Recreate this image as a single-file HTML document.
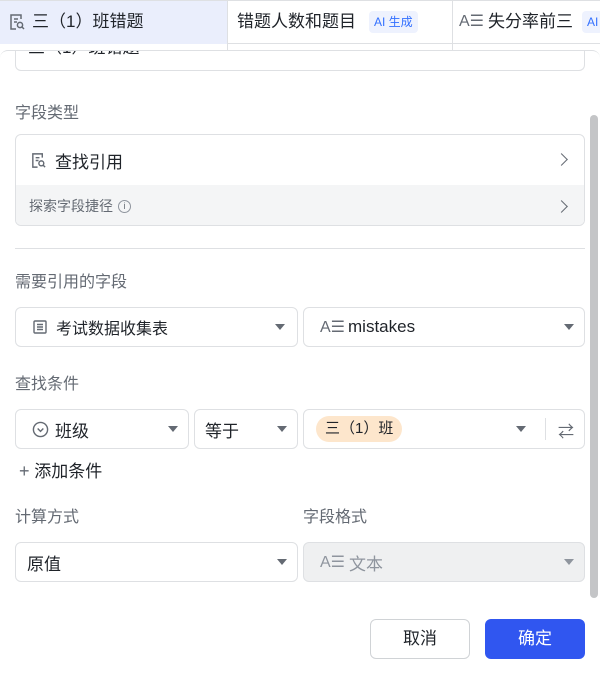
<!DOCTYPE html>
<html><head><meta charset="utf-8"><style>
*{box-sizing:border-box;margin:0;padding:0}
body{width:600px;height:675px;overflow:hidden;background:#fff;font-family:"Liberation Sans","Noto Sans CJK SC",sans-serif;color:#1f2329;position:relative}
.abs{position:absolute}
.lbl{position:absolute;font-size:16px;color:#646a73;line-height:20px}
.box{position:absolute;border:1px solid #dee0e3;border-radius:6px;background:#fff;display:flex;align-items:center;font-size:16px}
.arr{position:absolute;right:10px;top:50%;margin-top:-3px;width:0;height:0;border-left:5px solid transparent;border-right:5px solid transparent;border-top:6px solid #646a73}
.chev{position:absolute;right:18px;width:9px;height:9px;border-right:1.6px solid #646a73;border-top:1.6px solid #646a73;transform:rotate(45deg)}
</style></head><body>
<!-- header -->
<div class="abs" style="left:0;top:0;width:600px;height:44px;border-bottom:1px solid #dee0e3;border-top:1px solid #dee0e3"></div>
<div class="abs" style="left:0;top:1px;width:227px;height:43px;background:#eaeefc"></div>
<div class="abs" style="left:227px;top:0;width:1px;height:50px;background:#dee0e3"></div>
<div class="abs" style="left:452px;top:0;width:1px;height:50px;background:#dee0e3"></div>
<div class="abs" style="left:8px;top:12px;font-size:17px;line-height:20px;color:#1f2329;display:flex;align-items:center">
<svg width="18" height="18" viewBox="0 0 18 18" fill="none" stroke="#646a73" stroke-width="1.5"><path d="M13 6V2H3v14h5"/><path d="M6 6h4M6 9h3"/><circle cx="12" cy="12" r="2.6"/><path d="M14 14l2 2"/></svg>
<span style="margin-left:6px">三（1）班错题</span></div>
<div class="abs" style="left:237px;top:12px;font-size:17px;line-height:20px">错题人数和题目</div>
<div class="abs" style="left:369px;top:11px;height:22px;padding:0 5px;background:#eef2fe;border-radius:4px;font-size:12px;line-height:22px;color:#3370ff">AI 生成</div>
<div class="abs" style="left:459px;top:12px;font-size:17px;line-height:20px;display:flex;align-items:center"><span style="color:#646a73;font-size:16px">A☰</span><span style="margin-left:4px">失分率前三</span></div>
<div class="abs" style="left:582px;top:11px;height:22px;padding:0 5px;background:#eef2fe;border-radius:4px;font-size:12px;line-height:22px;color:#3370ff">AI</div>
<!-- panel -->
<div class="abs" style="left:0;top:50px;width:600px;height:625px;background:#fff;border-top:1px solid #dee0e3;border-radius:8px 8px 0 0"></div>
<div class="abs" style="left:15px;top:51px;width:570px;height:20px;border-left:1px solid #dee0e3;border-right:1px solid #dee0e3;border-bottom:1px solid #dee0e3;border-radius:0 0 6px 6px;overflow:hidden"><div style="position:absolute;left:12px;top:-13px;font-size:17px;color:#1f2329;line-height:20px">三（1）班错题</div></div>
<!-- scrollbar -->
<div class="abs" style="left:590px;top:115px;width:8px;height:483px;background:#c4c5c7;border-radius:4px"></div>

<div class="lbl" style="left:15px;top:104px">字段类型</div>
<div class="abs" style="left:15px;top:134px;width:570px;height:92px;border:1px solid #dee0e3;border-radius:6px;overflow:hidden">
 <div style="position:absolute;left:0;top:0;width:100%;height:50px;display:flex;align-items:center;padding-left:14px;font-size:17px">
 <svg width="17" height="17" viewBox="0 0 18 18" fill="none" stroke="#646a73" stroke-width="1.5"><path d="M13 6V2H3v14h5"/><path d="M6 6h4M6 9h3"/><circle cx="12" cy="12" r="2.6"/><path d="M14 14l2 2"/></svg>
 <span style="margin-left:8px">查找引用</span><div class="chev" style="top:20px"></div></div>
 <div style="position:absolute;left:0;top:50px;width:100%;height:42px;background:#f4f5f6;display:flex;align-items:center;padding-left:13px;font-size:14px;color:#646a73">探索字段捷径 <span style="display:inline-block;margin-left:5px;width:13px;height:13px;border:1px solid #8f959e;border-radius:50%;font-size:9px;line-height:11px;text-align:center">i</span><div class="chev" style="top:17px"></div></div>
</div>
<div class="abs" style="left:15px;top:248px;width:570px;height:1px;background:#dee0e3"></div>

<div class="lbl" style="left:15px;top:273px">需要引用的字段</div>
<div class="box" style="left:15px;top:307px;width:283px;height:40px;padding-left:16px">
 <svg width="16" height="16" viewBox="0 0 16 16" fill="none" stroke="#646a73" stroke-width="1.4"><rect x="2" y="2" width="12" height="12" rx="1"/><path d="M5 5.5h6M5 8h6M5 10.5h6"/></svg>
 <span style="margin-left:8px">考试数据收集表</span><div class="arr" style="right:12px"></div></div>
<div class="box" style="left:303px;top:307px;width:282px;height:40px;padding-left:16px"><span style="color:#646a73;font-size:16px">A☰</span><span style="margin-left:3px;font-size:17px">mistakes</span><div class="arr"></div></div>

<div class="lbl" style="left:15px;top:375px">查找条件</div>
<div class="box" style="left:15px;top:409px;width:174px;height:40px;padding-left:16px">
 <svg width="17" height="17" viewBox="0 0 18 18" fill="none" stroke="#646a73" stroke-width="1.5"><circle cx="9" cy="9" r="7.5"/><path d="M6 8l3 3 3-3"/></svg>
 <span style="margin-left:6px;font-size:17px">班级</span><div class="arr"></div></div>
<div class="box" style="left:194px;top:409px;width:104px;height:40px;padding-left:10px"><span style="font-size:17px">等于</span><div class="arr"></div></div>
<div class="box" style="left:303px;top:409px;width:282px;height:40px;padding-left:12px">
 <span style="background:#fde6cc;border-radius:13px;height:26px;line-height:26px;padding:0 9px;font-size:15px">三（1）班</span>
 <div class="arr" style="right:58px"></div>
 <div style="position:absolute;right:38px;top:8px;width:1px;height:22px;background:#dee0e3"></div>
 <span style="position:absolute;right:10px;top:8px;color:#646a73;font-size:16px">⇄</span></div>
<div class="abs" style="left:19px;top:461px;font-size:17px;line-height:20px"><span style="color:#646a73;font-size:18px">+</span> 添加条件</div>

<div class="lbl" style="left:15px;top:508px">计算方式</div>
<div class="lbl" style="left:303px;top:508px">字段格式</div>
<div class="box" style="left:15px;top:542px;width:283px;height:40px;padding-left:11px"><span style="font-size:17px">原值</span><div class="arr"></div></div>
<div class="box" style="left:303px;top:542px;width:282px;height:40px;padding-left:16px;background:#eff0f1;color:#8f959e"><span style="font-size:16px">A☰</span><span style="margin-left:4px;font-size:17px">文本</span><div class="arr" style="border-top-color:#8f959e"></div></div>

<div class="abs" style="left:370px;top:619px;width:100px;height:40px;border:1px solid #d0d3d6;border-radius:6px;text-align:center;line-height:38px;font-size:17px">取消</div>
<div class="abs" style="left:485px;top:619px;width:100px;height:40px;background:#3056f0;border-radius:6px;text-align:center;line-height:40px;font-size:17px;color:#fff">确定</div>
</body></html>
